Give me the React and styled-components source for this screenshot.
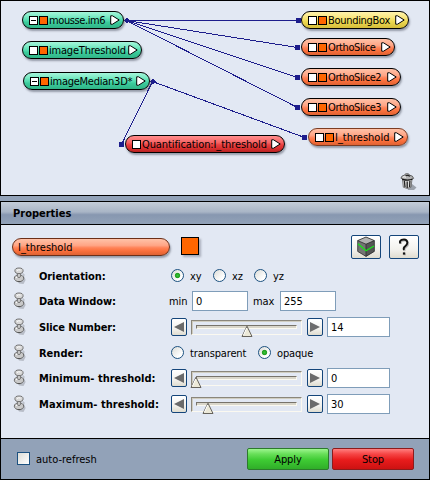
import React from 'react';
import styled, { createGlobalStyle, css } from 'styled-components';

const Global = createGlobalStyle`
  * { box-sizing: border-box; }
  body { margin: 0; background: #92a2b8; }
`;

const ink = '#1d1d8c';

const Window = styled.main`
  width: 430px;
  height: 480px;
  display: flex;
  flex-direction: column;
  gap: 5px;
  overflow: hidden;
  background: #92a2b8;
  font: 11px/14px 'DejaVu Sans Condensed', 'DejaVu Sans', sans-serif;
  font-stretch: condensed;
  color: #000;
`;

const Pool = styled.section`
  position: relative;
  height: 196px;
  flex: none;
  border: 1px solid #000;
  background: #e2e8f3;
`;

const Wires = styled.svg`
  position: absolute;
  left: -1px;
  top: -1px;
`;

const tones = {
  green: 'linear-gradient(#a5f5da, #7aeac4 30%, #52dbae 52%, #3bcb9b 65%, #30b487)',
  yellow: 'linear-gradient(#fff3ae, #f9e67e 35%, #edd850 60%, #d5bd3a)',
  orange: 'linear-gradient(#ffc2a8, #ffa586 40%, #ff8358 55%, #fa6f3b 75%, #de6233)',
  red: 'linear-gradient(#ff8d8d, #f66464 40%, #ea4141 55%, #dc3030 75%, #b92222)',
};

const pill = css`
  height: 18px;
  border: 1px solid #000;
  border-radius: 9px;
  display: flex;
  align-items: center;
  background: ${p => tones[p.$tone]};
  box-shadow: 1px 2px 2px rgba(60, 65, 80, 0.45);
`;

const NodePill = styled.div`
  ${pill}
  position: absolute;
  left: ${p => p.$x - 1}px;
  top: ${p => p.$y - 1}px;
  width: ${p => p.$w}px;
  padding: 0 3px 0 6px;
  border-color: ${p => (p.$selected ? '#7c3d24' : '#000')};
`;

const Box = styled.i`
  width: 9px;
  height: 9px;
  flex: none;
  margin: 0 1px 0 0;
  display: flex;
  align-items: center;
  justify-content: center;
  border: 1px solid #000;
  background: ${p => (p.$filled ? '#ff6600' : '#fff')};
  &::after {
    content: '';
    width: 5px;
    height: ${p => (p.$minus ? 1 : 0)}px;
    background: #000;
  }
`;

const NodeName = styled.span`
  flex: 1;
  padding-top: 2px;
  white-space: nowrap;
  letter-spacing: ${p => p.$track || 0}px;
`;

const Arrow = styled.svg`
  flex: none;
  display: block;
`;

const Trash = styled.svg`
  position: absolute;
  left: 398px;
  top: 171px;
`;

const Properties = styled.section`
  height: 279px;
  flex: none;
  display: flex;
  flex-direction: column;
  border: 1px solid #000;
  background: #e2e8f3;
`;

const Header = styled.h1`
  margin: 0;
  height: 23px;
  flex: none;
  padding: 5px 0 0 12px;
  border-bottom: 1px solid #000;
  background: linear-gradient(#c3ccd8, #a9b5c6 45%, #8797b0 58%, #92a2b8);
  font-size: 11px;
  line-height: 14px;
`;

const TitleRow = styled.div`
  height: 38px;
  flex: none;
  display: flex;
  padding: 10px 0 0 11px;
`;

const TitlePill = styled.div`
  ${pill}
  width: 158px;
  margin-top: 3px;
  padding: 2px 0 0 5px;
  border-color: #6b2f18;
`;

const Swatch = styled.div`
  width: 18px;
  height: 18px;
  margin: 2px 0 0 11px;
  border: 1px solid #000;
  background: #ff6600;
  box-shadow: 2px 2px 2px rgba(60, 65, 80, 0.35);
`;

const raised = css`
  border: 1px solid #14457a;
  border-radius: 2px;
  background: linear-gradient(#fff, #f3f2ee 60%, #dfdccf);
  display: flex;
  align-items: center;
  justify-content: center;
  padding: 0;
`;

const IconButton = styled.button`
  ${raised}
  width: 30px;
  height: 24px;
  margin-left: ${p => p.$gap}px;
`;

const Rows = styled.div`
  flex: 1;
  display: grid;
  align-content: start;
  grid-template-rows: 25px 26px 26px 25px 26px 26px;
`;

const Row = styled.div`
  display: grid;
  grid-template-columns: 26px 132px 1fr;
  align-items: center;
  padding-left: 12px;
`;

const Label = styled.b`
  white-space: nowrap;
  padding-top: 2px;
  letter-spacing: ${p => p.$track || 0}px;
`;

const Controls = styled.div`
  display: flex;
  align-items: center;
`;

const Radio = styled.span`
  width: 13px;
  height: 13px;
  margin: -3px 6px 0 0;
  flex: none;
  border: 1px solid #1c5180;
  border-radius: 50%;
  background: ${p => (p.$on ? 'radial-gradient(circle at 50% 50%, #3ac43a 0, #21a121 2.2px, transparent 3.1px),' : '')}
    linear-gradient(135deg, #dcdcd7, #fff 75%);
`;

const Option = styled.label`
  display: flex;
  align-items: center;
  width: ${p => p.$w}px;
  padding-top: 2px;
  letter-spacing: -0.15px;
  white-space: nowrap;
`;

const Caption = styled.span`
  width: ${p => p.$w}px;
  margin-left: ${p => p.$gap}px;
  padding-top: 1px;
  letter-spacing: -0.1px;
`;

const Field = styled.input`
  width: ${p => p.$w}px;
  height: 20px;
  padding: 0 0 0 3px;
  margin: 0;
  border: 1px solid #7f9db9;
  border-radius: 0;
  background: #fff;
  color: #000;
  font: inherit;
  letter-spacing: -0.1px;
`;

const Step = styled.button`
  ${raised}
  width: 16px;
  height: 18px;
`;

const Track = styled.div`
  position: relative;
  width: 111px;
  height: 15px;
  margin: 0 5px 0 4px;
  border: 1px solid;
  border-color: #8a867b #fbf9f0 #fbf9f0 #8a867b;
  box-shadow: inset 1px 1px 0 #d0cdc0;
`;

const Groove = styled.div`
  height: 4px;
  margin: 4px 4px 0;
  border: 1px solid;
  border-color: #77736a #fbf9f0 #fbf9f0 #77736a;
  background: #d9d6ca;
`;

const Thumb = styled.svg`
  position: absolute;
  top: 4px;
  left: ${p => p.$at}px;
`;

const Footer = styled.footer`
  height: 41px;
  flex: none;
  display: flex;
  align-items: center;
  padding-left: 16px;
  border-top: 1px solid #000;
  background: #92a2b8;
`;

const Check = styled.span`
  width: 13px;
  height: 13px;
  border: 1px solid #1c5180;
  background: linear-gradient(135deg, #dcdcd7, #fff);
  margin: -1px 6px 0 0;
`;

const FooterText = styled.label`
  width: 211px;
  padding-top: 1px;
`;

const Action = styled.button`
  width: 82px;
  height: 22px;
  margin-right: 3px;
  padding: 1px 0 0;
  font: inherit;
  letter-spacing: -0.1px;
  color: #000;
  border: 1px solid ${p => (p.$stop ? '#8c1c1c' : '#2c7a2c')};
  border-radius: 2px;
  background: ${p =>
    p.$stop
      ? 'linear-gradient(#ff8080, #f64646 25%, #e81c1c 55%, #cd1212)'
      : 'linear-gradient(#9df58f, #68df59 25%, #3ecb33 55%, #30ae29)'};
`;

const nodes = [
  { x: 22, y: 11, w: 102, tone: 'green', name: 'mousse.im6', minus: true, track: -0.4 },
  { x: 22, y: 41, w: 120, tone: 'green', name: 'imageThreshold', track: -0.2 },
  { x: 23, y: 72, w: 127, tone: 'green', name: 'imageMedian3D*', minus: true, track: -0.25 },
  { x: 125, y: 135, w: 160, tone: 'red', name: 'Quantification:I_threshold', single: true, track: -0.1 },
  { x: 301, y: 11, w: 108, tone: 'yellow', name: 'BoundingBox', track: -0.3 },
  { x: 301, y: 38, w: 94, tone: 'orange', name: 'OrthoSlice', track: -0.4 },
  { x: 301, y: 68, w: 100, tone: 'orange', name: 'OrthoSlice2', track: -0.4 },
  { x: 301, y: 98, w: 100, tone: 'orange', name: 'OrthoSlice3', track: -0.4 },
  { x: 308, y: 128, w: 100, tone: 'orange', name: 'I_threshold', selected: true },
];

const wires = [
  [126, 20, 298, 20],
  [126, 20, 297, 47],
  [126, 20, 297, 77],
  [126, 20, 297, 107],
  [152, 81, 304, 137],
  [152, 81, 121, 144],
];

function Node({ x, y, w, tone, name, minus, single, selected, track }) {
  return (
    <NodePill $x={x} $y={y} $w={w} $tone={tone} $selected={selected}>
      <Box $minus={minus} />
      {!single && <Box $filled />}
      <NodeName $track={track}>{name}</NodeName>
      <Arrow width="10" height="10" viewBox="0 0 10 10">
        <path d="M.7 .8V9.2H2.5L9.2 5 2.5 .8Z" fill="#fff" stroke="#000" />
      </Arrow>
    </NodePill>
  );
}

function Pin() {
  return (
    <svg width="14" height="20" viewBox="0 0 14 20">
      <path d="M5 15.5 11 10 12.6 14 10.5 18 6 17.5Z" fill="#8d929b" opacity=".5" />
      <path d="M9 6 12 9 10 11Z" fill="#a5a9b1" opacity=".6" />
      <ellipse cx="6" cy="12.2" rx="4.7" ry="3.5" fill="#c9c9c9" stroke="#6a6a6a" />
      <path d="M3 12Q4 10.3 5 10.2" stroke="#fff" fill="none" />
      <path d="M4.8 7V11Q6 12.2 7.2 11V7Z" fill="#eee" stroke="#505050" strokeWidth=".8" />
      <ellipse cx="6" cy="4.8" rx="4.1" ry="2.8" fill="#d8d8d8" stroke="#727272" />
      <path d="M4 4.5Q5.5 3.2 7.5 4.1" stroke="#fff" fill="none" />
      <path d="M4.5 15.5H7.5" stroke="#555" />
    </svg>
  );
}

function StepArrow({ right }) {
  return (
    <svg width="12" height="12" viewBox="0 0 12 12">
      <path d={right ? 'M1 1V11L11 6Z' : 'M11 1V11L1 6Z'} fill="#6b6b6b" />
    </svg>
  );
}

function Slider({ at, value }) {
  return (
    <Controls>
      <Step><StepArrow /></Step>
      <Track>
        <Groove />
        <Thumb $at={at} width="12" height="13" viewBox="0 0 12 13">
          <path d="M6 1.2 11 11.5H1Z" fill="#ece9d8" stroke="#66635c" />
          <path d="M5.7 3 2.5 10" stroke="#fff" />
        </Thumb>
      </Track>
      <Step><StepArrow right /></Step>
      <Caption $w={0} $gap={4} />
      <Field $w={63} defaultValue={value} />
    </Controls>
  );
}

function PropertyRow({ label, track, children }) {
  return (
    <Row>
      <Pin />
      <Label $track={track}>{label}</Label>
      <Controls>{children}</Controls>
    </Row>
  );
}

export default function App() {
  return (
    <Window>
      <Global />
      <Pool>
        <Wires width="430" height="196" shapeRendering="crispEdges">
          {wires.map(([a, b, c, d], i) => (
            <g key={i} stroke={ink} fill={ink}>
              <line x1={a + 0.5} y1={b + 0.5} x2={c + 0.5} y2={d + 0.5} />
              <path d={`M${a - 2.5} ${b + 0.5}l3-3 3 3-3 3Z`} stroke="none" />
              <rect x={c - 2} y={d - 2} width="5" height="5" stroke="none" />
            </g>
          ))}
        </Wires>
        {nodes.map(n => <Node key={n.name} {...n} />)}
        <Trash width="20" height="20" viewBox="0 0 20 20">
          <path d="M8 15 13 12 17.5 15.5 15 18 9 18Z" fill="#6c717b" opacity=".6" />
          <path d="M3.5 7 4.3 15.2Q8 17.6 12 15.2L13 7Z" fill="#dedede" stroke="#5a5a5a" strokeWidth=".8" />
          <path d="M5.4 9 6 15M8.2 9.5V16M10.9 9 10.6 15" stroke="#222" strokeWidth="1.3" />
          <path d="M1.9 6.2Q2.4 3.4 5.5 3.2L6.5 1.8H9.5L10.6 3.2Q14 3.4 14.6 6.4Q8.5 9.4 1.9 6.2Z" fill="#b4b4b4" stroke="#4a4a4a" strokeWidth=".8" />
          <path d="M3.2 7.4Q8.5 9.2 13.4 7.2" stroke="#111" strokeWidth="1.2" fill="none" />
          <path d="M6.5 3.8Q9 2.6 11 4.4" stroke="#222" strokeWidth="1.2" fill="none" />
          <path d="M3.6 5.2Q5 4.4 7 5.2" stroke="#fff" fill="none" />
        </Trash>
      </Pool>
      <Properties>
        <Header>Properties</Header>
        <TitleRow>
          <TitlePill $tone="orange">I_threshold</TitlePill>
          <Swatch />
          <IconButton $gap={152}>
            <svg width="20" height="22" viewBox="0 0 20 22">
              <path d="M10 1 18.3 4.6V15.4L10 20.4 1.7 15.4V4.6Z" fill="#747474" />
              <path d="M10 1 18.3 4.6 10 8.2 1.7 4.6Z" fill="#b2b2b2" />
              <path d="M10 8.2V20.4L18.3 15.4V4.6Z" fill="#555" />
              <path d="M10 1 18.3 4.6V15.4L10 20.4 1.7 15.4V4.6ZM10 8.2V20.4M1.7 4.6 10 8.2 18.3 4.6" stroke="#2d2d2d" strokeWidth=".8" fill="none" />
              <path d="M2 7.8 10 14.8 18 10" stroke="#19e319" strokeWidth="1.3" fill="none" />
            </svg>
          </IconButton>
          <IconButton $gap={8}>
            <svg width="18" height="20" viewBox="0 0 18 20">
              <g fill="none" stroke="#bbb" strokeWidth="1.8">
                <path d="M6 7V5Q7 3.5 9.8 3.5T13.4 6.5Q13.4 8.5 11 10.3T10 14" />
                <path d="M8.7 17.4H11" />
              </g>
              <g fill="none" stroke="#111" strokeWidth="1.9">
                <path d="M5 6.4V4.2Q6 2.5 9 2.5T12.4 5.6Q12.4 7.6 10.2 9.2T9 13" />
                <path d="M7.9 16.5H10.2" strokeWidth="2.2" />
              </g>
            </svg>
          </IconButton>
        </TitleRow>
        <Rows>
          <PropertyRow label="Orientation:" track={-0.1}>
            <Option $w={42}><Radio $on />xy</Option>
            <Option $w={41}><Radio />xz</Option>
            <Option $w={41}><Radio />yz</Option>
          </PropertyRow>
          <PropertyRow label="Data Window:" track={-0.1}>
            <Caption $w={23} $gap={-2}>min</Caption>
            <Field $w={56} defaultValue="0" />
            <Caption $w={27} $gap={5}>max</Caption>
            <Field $w={56} defaultValue="255" />
          </PropertyRow>
          <PropertyRow label="Slice Number:" track={-0.1}><Slider at={49} value="14" /></PropertyRow>
          <PropertyRow label="Render:">
            <Option $w={87}><Radio />transparent</Option>
            <Option $w={60}><Radio $on />opaque</Option>
          </PropertyRow>
          <PropertyRow label="Minimum- threshold:"><Slider at={-2} value="0" /></PropertyRow>
          <PropertyRow label="Maximum- threshold:" track={0.05}><Slider at={10} value="30" /></PropertyRow>
        </Rows>
        <Footer>
          <Check />
          <FooterText>auto-refresh</FooterText>
          <Action>Apply</Action>
          <Action $stop>Stop</Action>
        </Footer>
      </Properties>
    </Window>
  );
}
